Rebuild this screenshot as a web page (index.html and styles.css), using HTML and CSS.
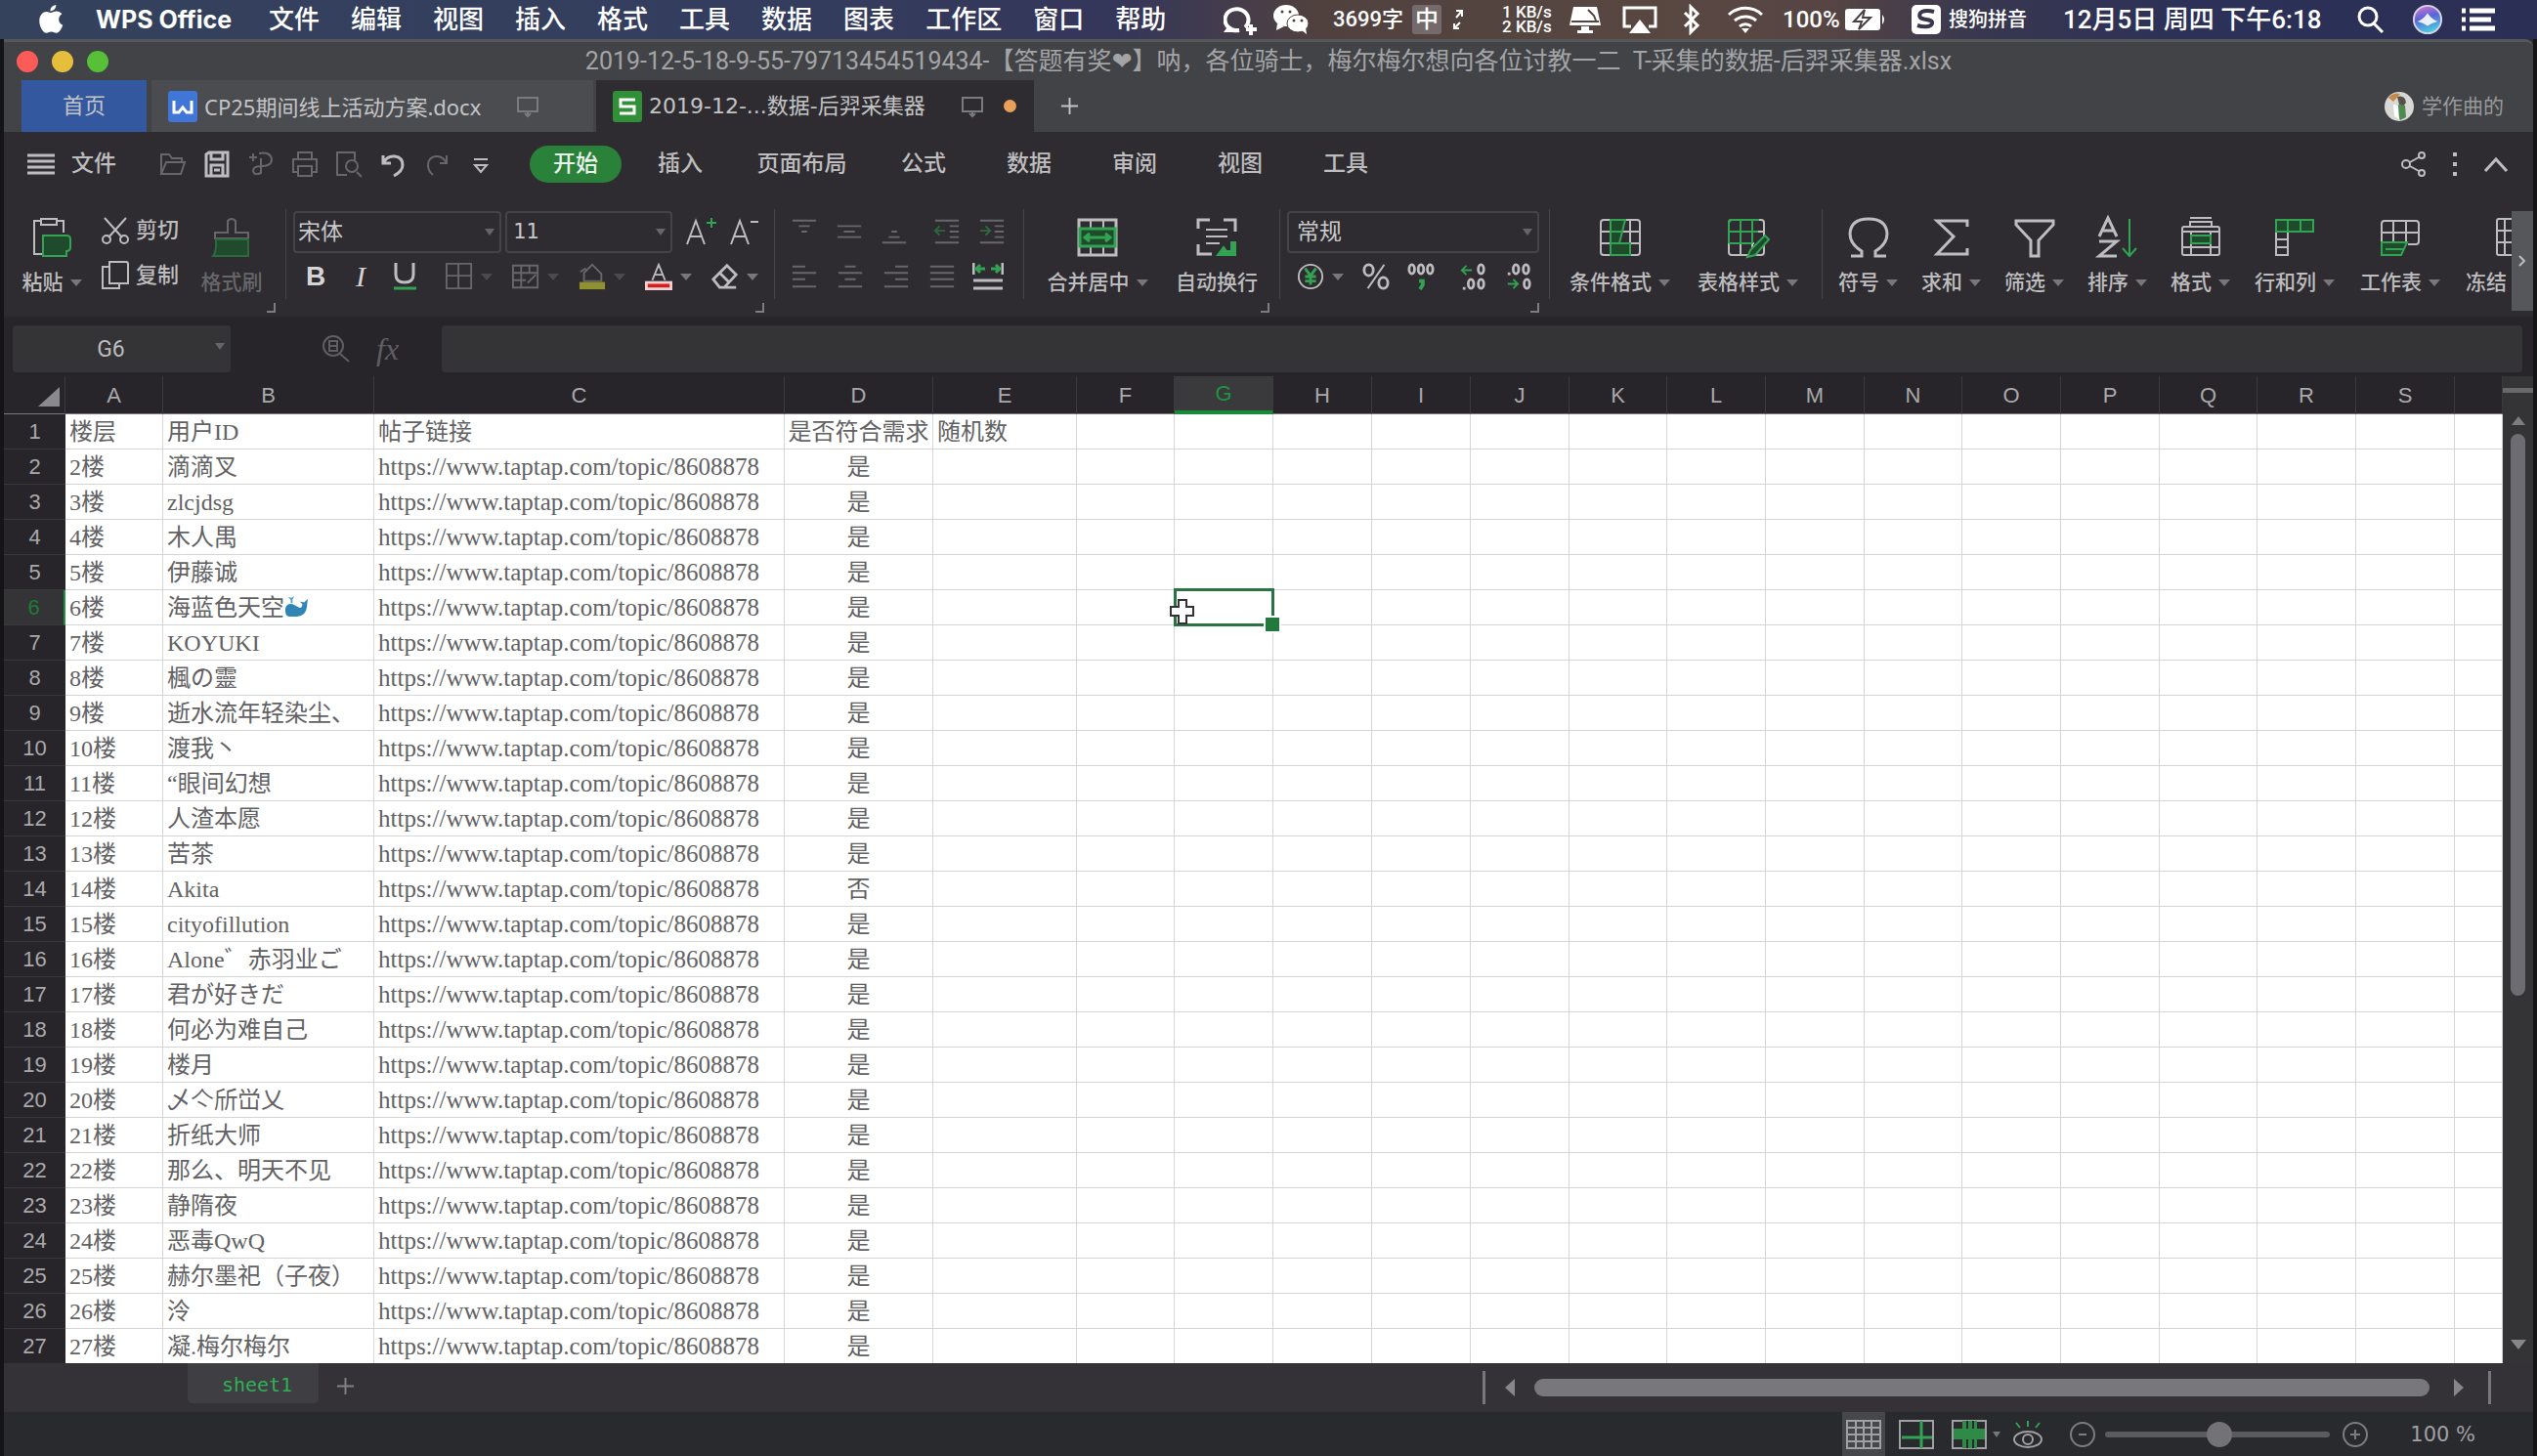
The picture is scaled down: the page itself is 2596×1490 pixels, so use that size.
FILE: index.html
```html
<!DOCTYPE html>
<html lang="zh-CN">
<head>
<meta charset="utf-8">
<title>WPS Office</title>
<link rel="stylesheet" href="styles.css">
</head>
<body>
<header class="menubar">
  <nav class="menus">
    <svg class="apple" viewBox="0 0 26 30"><path fill="#fff" d="M18 1c.3 3-2.500 6-5.500 6C12.200 4 15 1.300 18 1zM13 8.500c1.300 0 3-1.500 5.500-1.500 2 0 4 1 5.200 2.700-4.500 2.700-3.800 9 .8 10.800-1 3-3.500 7.500-6 7.500-2 0-2.600-1.200-5-1.200S10.300 28 8.500 28C5.500 28 2 21.500 2 16.500 2 10.500 5.600 7.500 8.800 7.500c1.900 0 3.200 1 4.200 1z"/></svg>
    <a class="app" href="#">WPS Office</a>
    <a href="#">文件</a><a href="#">编辑</a><a href="#">视图</a><a href="#">插入</a><a href="#">格式</a><a href="#">工具</a><a href="#">数据</a><a href="#">图表</a><a href="#">工作区</a><a href="#">窗口</a><a href="#">帮助</a>
  </nav>
  <div class="tray">
    <svg class="i34" viewBox="0 0 34 32" stroke-width="4"><path d="M22 24a12 11 0 1 0-6 3"/><path d="M7 23l-3 4h12"/><path d="M28 21v11M23 26h11" stroke-width="4"/></svg>
    <svg class="i38" viewBox="0 0 38 32" stroke-width="0"><ellipse cx="14" cy="12" rx="13" ry="11" fill="#fff"/><path d="M5 20l-1 7 8-4z" fill="#fff"/><ellipse cx="26" cy="20" rx="11" ry="9" fill="#fff" stroke="#51423f" stroke-width="1"/><path d="M30 27l5 4-1-7z" fill="#fff"/><g fill="#51423f"><circle cx="10" cy="8" r="1.500"/><circle cx="18" cy="8" r="1.500"/><circle cx="22" cy="17" r="1.500"/><circle cx="30" cy="17" r="1.500"/></g></svg>
    <span class="count">3699字</span>
    <span class="ime">中</span>
    <svg class="i14" viewBox="0 0 14 24" stroke-width="2"><path d="M5 3h6v6M11 3l-6 7M8 21H3v-5M3 21l6-6"/></svg>
    <span class="speed"><span>1 KB/s</span><span>2 KB/s</span></span>
    <svg class="i34" viewBox="0 0 34 32" stroke-width="0"><path fill="#fff" d="M5 3h24l4 19H1zM13 23h8v4h4v3H9v-3h4z"/><path d="M20 6l6 6 2 5M3 18h28" stroke="#55443f" stroke-width="2"/></svg>
    <svg class="i38" viewBox="0 0 38 32" stroke-width="3"><path d="M10 23H3V4h32v19h-7"/><path fill="#fff" stroke="none" d="M19 16l11 14H8z"/></svg>
    <svg class="i20" viewBox="0 0 20 32" stroke-width="3"><path d="M3 9l13 13-7 7V3l7 7L3 23"/></svg>
    <svg class="i38" viewBox="0 0 38 32" stroke-width="3"><path d="M2 11a25 25 0 0 1 34 0M8 17a17 17 0 0 1 22 0M13 23a9 9 0 0 1 12 0"/><path fill="#fff" stroke="none" d="M15 25h8l-4 5z"/></svg>
    <span class="pct">100%</span>
    <svg class="batt" viewBox="0 0 44 26" stroke-width="0"><rect x="1" y="2" width="36" height="22" rx="3" fill="#fff"/><path d="M39 8q4 5 0 10z" fill="#fff"/><path d="M21 3l-11 12h8l-3 8 12-12h-8z" fill="#fff" stroke="#4a3f45" stroke-width="2"/></svg>
    <svg class="i30" viewBox="0 0 30 32" stroke-width="0"><rect y="1" width="30" height="30" rx="5" fill="#fff"/><path d="M23 8C12 5 6 9 9 14c3 3 13 1 12 6-1 4-9 4-15 2" stroke="#38354d" stroke-width="4"/></svg>
    <span class="sogou">搜狗拼音</span>
    <span class="clock">12月5日 周四 下午6:18</span>
    <svg class="i30" viewBox="0 0 30 32" stroke-width="3"><circle cx="12" cy="13" r="9"/><path d="M18 20l9 9"/></svg>
    <svg class="i34" viewBox="0 0 34 34" stroke-width="0"><defs><linearGradient id="siri" x1="0" y1="0" x2="0.300" y2="1"><stop offset="0" stop-color="#e87ad0"/><stop offset=".5" stop-color="#5a63d8"/><stop offset="1" stop-color="#48c8e0"/></linearGradient></defs><circle cx="17" cy="17" r="15" fill="url(#siri)" stroke="#d8d4e4" stroke-width="2"/><path d="M6 19q6-2 11-9 5 7 11 9-6 1-11 5-5-4-11-5z" fill="#eaf0ff"/></svg>
    <svg class="i38" viewBox="0 0 38 32" stroke-width="5"><path d="M1 7h4M9 7h26M1 16h4M9 16h22M1 25h4M9 25h26"/></svg>
  </div>
</header>

<main class="window">
  <div class="titlebar">
    <div class="lights"><button class="close" aria-label="关闭"></button><button class="min" aria-label="最小化"></button><button class="max" aria-label="缩放"></button></div>
    <h1>2019-12-5-18-9-55-79713454519434-【答题有奖❤】呐，各位骑士，梅尔梅尔想向各位讨教一二&nbsp; T-采集的数据-后羿采集器.xlsx</h1>
    <div></div>
  </div>

  <div class="doctabs">
    <button class="home">首页</button>
    <button class="doc doc-w"><svg class="logo" viewBox="0 0 30 32"><rect width="30" height="32" rx="3" fill="#3f76d8"/><path d="M6 10v12h5l4-5 4 5h5V10" fill="none" stroke="#fff" stroke-width="3"/></svg><span class="name">CP25期间线上活动方案.docx</span><svg class="screen" viewBox="0 0 24 24"><path d="M2 3h20v14H2zM12 17v4M9 19l3 3 3-3"/></svg></button>
    <button class="doc doc-s"><svg class="logo" viewBox="0 0 30 32"><rect width="30" height="32" rx="3" fill="#2f9038"/><path d="M23 9H8v7h14v7H7" fill="none" stroke="#fff" stroke-width="3"/></svg><span class="name">2019-12-...数据-后羿采集器</span><svg class="screen" viewBox="0 0 24 24"><path d="M2 3h20v14H2zM12 17v4M9 19l3 3 3-3"/></svg><i class="dot"></i></button>
    <button class="plus" aria-label="新建"><svg viewBox="0 0 20 20"><path d="M10 1v18M1 10h18"/></svg></button>
    <div class="user"><svg viewBox="0 0 30 30"><circle cx="15" cy="15" r="15" fill="#d9d8d6"/><path d="M4 6q5-6 12-4l-7 8z" fill="#c58a4a"/><path d="M13 5q8-2 9 6l-3 4-4-2z" fill="#55544a"/><path d="M14 13l7 1 1 12-6 3-3-7z" fill="#4f8a50"/><path d="M9 13l5 1 1 14-5-3z" fill="#fff"/></svg><span>学作曲的</span></div>
  </div>

  <div class="quick">
    <button class="filemenu"><svg viewBox="0 0 28 24" stroke-width="3"><path d="M0 3h28M0 9h28M0 15h28M0 21h28"/></svg>文件</button>
    <div class="qicons">
      <button class="dim" aria-label="打开"><svg viewBox="0 0 28 28"><path d="M2 24V4h8l3 4h10v4M2 24l5-12h19l-4 12z"/></svg></button>
      <button aria-label="保存"><svg viewBox="0 0 28 28" stroke-width="3"><path d="M3 4l3-2h19v24H3zM8 2v7h12V2M8 26V15h12v11M11 20h6"/></svg></button>
      <button class="dim" aria-label="输出"><svg viewBox="0 0 28 28"><path d="M2 7h8M6 3v8M12 3q12-2 13 6 0 7-11 7M14 16q-8 0-8 5 1 5 8 2V8"/></svg></button>
      <button class="dim" aria-label="打印"><svg viewBox="0 0 28 28"><path d="M7 9V2h14v7M7 22H2V9h24v13h-5M7 16h14v10H7z"/></svg></button>
      <button class="dim" aria-label="预览"><svg viewBox="0 0 28 28"><path d="M12 25H2V2h18v8M22 22l5 5"/><circle cx="17" cy="16" r="6"/></svg></button>
      <button aria-label="撤销"><svg viewBox="0 0 28 28" stroke-width="3"><path d="M4 5v8h8M4 13q4-8 12-7 8 1 8 9 0 6-9 11"/></svg></button>
      <button class="dim" aria-label="恢复"><svg viewBox="0 0 28 28"><path d="M24 5v8h-7M24 13q-4-8-11-7-8 1-8 9 0 6 5 10"/></svg></button>
      <button aria-label="更多"><svg viewBox="0 0 28 28"><path d="M7 9h14M8 15h12l-6 7z"/></svg></button>
    </div>
    <button class="pill">开始</button>
    <nav class="rtabs"><button>插入</button><button>页面布局</button><button>公式</button><button>数据</button><button>审阅</button><button>视图</button><button>工具</button></nav>
    <div class="qright">
      <svg viewBox="0 0 28 28"><circle cx="6" cy="14" r="4"/><circle cx="22" cy="5" r="3"/><circle cx="22" cy="23" r="3"/><path d="M10 12l9-5M10 16l9 5"/></svg>
      <svg viewBox="0 0 28 28" stroke-width="4"><path d="M14 2v4M14 12v4M14 22v4"/></svg>
      <svg viewBox="0 0 28 28" stroke-width="3"><path d="M3 21L14 9l11 12"/></svg>
    </div>
  </div>

  <div class="ribbon">
    <div class="groups">
      <section class="group clip">
        <button class="big"><svg class="bi" viewBox="0 0 42 42"><path d="M10 4H3v34h8M26 4h7v12M10 2h16v6H10z"/><path class="g gf" d="M12 19h24q4 0 4 4v8q0 4-4 4v5H12z"/></svg><span>粘贴<i class="arr"></i></span></button>
        <div class="pair">
          <button><svg viewBox="0 0 30 30"><path d="M4 2l18 20M26 2L8 22"/><circle cx="6" cy="24" r="4"/><circle cx="24" cy="24" r="4"/></svg>剪切</button>
          <button><svg viewBox="0 0 30 30"><path d="M9 1h17q2 0 2 2v20H9zM9 6H2v22h17v-5"/></svg>复制</button>
        </div>
        <button class="big dim"><svg class="bi" viewBox="0 0 42 42"><path d="M17 16V4q4-4 8 0v12h13v6H4v-6z"/><path class="g gf" d="M5 23h33v17H2q3-4 3-10z"/></svg><span>格式刷</span></button>
        <i class="corner"></i>
      </section>
      <i class="sep"></i>
      <section class="group font two">
        <div class="row">
          <span class="sel s-font"><select aria-label="字体"><option>宋体</option></select></span>
          <span class="sel s-size"><select aria-label="字号"><option>11</option></select></span>
          <button class="t" aria-label="增大字号"><svg viewBox="0 0 32 30"><path d="M2 28L11 4l9 24M5 20h12"/><path class="g" d="M27 1v10M22 6h10"/></svg></button>
          <button class="t" aria-label="减小字号"><svg viewBox="0 0 32 30"><path d="M2 28L11 4l9 24M5 20h12M22 5h8"/></svg></button>
        </div>
        <div class="row split">
          <span class="tools"><button class="t b">B</button><button class="t it">I</button><button class="t" aria-label="下划线"><svg viewBox="0 0 32 30"><path stroke-width="3" d="M6 1v12q0 8 9 8t9-8V1"/><path class="g" stroke-width="3" d="M4 27h23"/></svg></button></span>
          <span class="tools drops">
            <button class="dim" aria-label="边框"><svg viewBox="0 0 30 30"><path d="M1 1h27v27H1zM14 1v27M1 14h27"/></svg><i class="arr"></i></button>
            <button class="dim" aria-label="绘制边框"><svg viewBox="0 0 30 30"><path d="M1 3h27v24H1zM1 11h27M1 19h14M10 3v24M19 3v8M17 22l9-9"/></svg><i class="arr"></i></button>
            <button class="dim" aria-label="填充颜色"><svg viewBox="0 0 30 30"><path d="M6 11L15 2l10 10v8H6zM2 10l6-4"/><path d="M1 25h28" stroke="#8f9030" stroke-width="8"/></svg><i class="arr"></i></button>
            <button aria-label="字体颜色"><svg viewBox="0 0 30 30"><path d="M8 19l7-17 7 17M10 13h10"/><path d="M0 25h30" stroke="#f0d0d0" stroke-width="10"/><path d="M3 25h24" stroke="#d02020" stroke-width="4"/></svg><i class="arr"></i></button>
            <button aria-label="清除"><svg viewBox="0 0 30 30" stroke-width="3"><path d="M2 18L17 3l10 10-13 14H9zM9 11l10 10M11 27h16"/></svg><i class="arr"></i></button>
          </span>
        </div>
        <i class="corner"></i>
      </section>
      <i class="sep"></i>
      <section class="group align two">
        <div class="row split">
          <span class="tools"><button class="t dim"><svg viewBox="0 0 30 30"><path d="M2 3h26M9 9h12M12 15h6"/></svg></button><button class="t dim"><svg viewBox="0 0 30 30"><path d="M2 9h26M9 15h12M2 21h26"/></svg></button><button class="t dim"><svg viewBox="0 0 30 30"><path d="M12 15h6M9 21h12M2 27h26"/></svg></button></span>
          <span class="tools"><button class="t dim"><svg viewBox="0 0 30 30"><path d="M2 3h26M18 9h10M18 15h10M18 21h10M2 27h26"/><path class="g" d="M2 14h11M7 9l-5 5 5 5"/></svg></button><button class="t dim"><svg viewBox="0 0 30 30"><path d="M2 3h26M18 9h10M18 15h10M18 21h10M2 27h26"/><path class="g" d="M2 14h11M8 9l5 5-5 5"/></svg></button></span>
        </div>
        <div class="row">
          <button class="t dim"><svg viewBox="0 0 30 30"><path d="M2 4h14M2 11h26M2 18h14M2 26h26"/></svg></button>
          <button class="t dim"><svg viewBox="0 0 30 30"><path d="M9 4h12M2 11h26M9 18h12M2 26h26"/></svg></button>
          <button class="t dim"><svg viewBox="0 0 30 30"><path d="M14 4h14M2 11h26M14 18h14M2 26h26"/></svg></button>
          <button class="t dim"><svg viewBox="0 0 30 30"><path d="M2 4h26M2 11h26M2 18h26M2 26h26"/></svg></button>
          <button class="t wideicon"><svg viewBox="0 0 32 30"><path stroke-width="3" d="M1 1v12M31 1v12M1 19h30M1 27h30"/><path class="g" stroke-width="3" d="M4 7h9M19 7h9M8 3L4 7l4 4M24 3l4 4-4 4"/></svg></button>
        </div>
      </section>
      <i class="sep"></i>
      <section class="group merge">
        <button class="big"><svg class="bi" viewBox="0 0 42 42"><path stroke-width="3" d="M2 3h38v36H2z"/><path d="M14 3v8M27 3v8M14 31v8M27 31v8"/><path class="g gf" stroke-width="3" d="M3 12h36v18H3zM8 21h26M13 17l-5 4 5 4M29 17l5 4-5 4"/></svg><span>合并居中<i class="arr"></i></span></button>
        <button class="big"><svg class="bi" viewBox="0 0 42 42"><path stroke-width="3" d="M2 12V3h12M28 3h12v9M2 28v10h14M40 12v3"/><path d="M10 13h22M10 20h22M10 27h14"/><path class="g gs" d="M40 26v13H22l6-8 3 4h5v-9z"/></svg><span>自动换行</span></button>
        <i class="corner"></i>
      </section>
      <i class="sep"></i>
      <section class="group num two">
        <div class="row"><span class="sel s-num"><select aria-label="数字格式"><option>常规</option></select></span></div>
        <div class="row split">
          <span class="tools"><button class="cur"><svg viewBox="0 0 30 30"><circle cx="15" cy="15" r="13"/><path class="g" stroke-width="3" d="M9 6l6 8 6-8M15 14v10M9 15h12M9 20h12"/></svg><i class="arr"></i></button><button class="t"><svg viewBox="0 0 30 30" stroke-width="3"><ellipse cx="7" cy="8" rx="5" ry="6"/><ellipse cx="23" cy="22" rx="5" ry="6"/><path stroke-width="2" d="M24 2L6 28"/></svg></button><button class="t"><svg viewBox="0 0 30 30"><g stroke-width="3"><ellipse cx="5" cy="7" rx="3" ry="5"/><ellipse cx="15" cy="7" rx="3" ry="5"/><ellipse cx="25" cy="7" rx="3" ry="5"/></g><path class="g" stroke-width="4" d="M13 20h4v4l-3 5"/></svg></button></span>
          <span class="tools"><button class="t"><svg viewBox="0 0 30 30"><path class="g" d="M2 8h11M7 3L2 8l5 5"/><g stroke-width="3"><ellipse cx="23" cy="7" rx="3" ry="5"/><ellipse cx="12" cy="23" rx="3" ry="5"/><ellipse cx="23" cy="23" rx="3" ry="5"/><path d="M3 28h3"/></g></svg></button><button class="t"><svg viewBox="0 0 30 30"><path class="g" d="M3 23h11M9 18l5 5-5 5"/><g stroke-width="3"><ellipse cx="12" cy="7" rx="3" ry="5"/><ellipse cx="23" cy="7" rx="3" ry="5"/><ellipse cx="24" cy="23" rx="3" ry="5"/><path d="M3 12h3"/></g></svg></button></span>
        </div>
        <i class="corner"></i>
      </section>
      <i class="sep"></i>
      <section class="group styles">
        <button class="big"><svg class="bi" viewBox="0 0 42 42"><rect x="1" y="3" width="40" height="36" rx="3"/><path d="M11 3v36M31 3v36M1 15h40M1 27h40"/><path class="g gf" d="M11 3h15l-6 24h11v12H11zM11 15h12M11 27h9"/></svg><span>条件格式<i class="arr"></i></span></button>
        <button class="big"><svg class="bi" viewBox="0 0 42 42"><rect x="1" y="3" width="36" height="36" rx="3"/><path d="M1 15h36M1 27h26M13 3v36M25 3v30"/><path class="g" d="M1 27V6q0-3 3-3h28M1 15h30M13 3v24M25 3v24M1 27h24"/><path class="g gf" d="M38 19l4 4-14 16-8 2 3-7z"/></svg><span>表格样式<i class="arr"></i></span></button>
      </section>
      <i class="sep"></i>
      <section class="group edit">
        <button class="big"><svg class="bi" viewBox="0 0 42 42"><path stroke-width="3" d="M3 40h11v-5Q2 28 2 17 3 2 21 2t19 15q0 11-12 18v5h11"/></svg><span>符号<i class="arr"></i></span></button>
        <button class="big"><svg class="bi" viewBox="0 0 42 42"><path stroke-width="3" d="M37 10V4H6l17 16L6 38h31v-6"/></svg><span>求和<i class="arr"></i></span></button>
        <button class="big"><svg class="bi" viewBox="0 0 42 42"><path stroke-width="3" d="M2 4h38v4L25 24v16h-8V24L2 8z"/></svg><span>筛选<i class="arr"></i></span></button>
        <button class="big"><svg class="bi" viewBox="0 0 42 42"><path stroke-width="3" d="M2 20L11 1l9 19M5 14h12M2 25h18L2 40h18"/><path class="g" d="M33 2v38M26 32l7 8 7-8"/></svg><span>排序<i class="arr"></i></span></button>
        <button class="big"><svg class="bi" viewBox="0 0 42 42"><rect x="2" y="10" width="38" height="29" rx="2"/><path d="M10 10V5h22v5M10 1h22M2 15h38M11 15v24M31 15v24M2 31h38"/><path class="g gf" d="M11 19h20v8H11z"/></svg><span>格式<i class="arr"></i></span></button>
        <button class="big wide"><svg class="bi" viewBox="0 0 42 42"><path d="M2 14v25h12V14M2 23h12M2 31h12"/><path class="g gf" d="M2 3h38v12H2zM14 3v12M27 3v12"/></svg><span>行和列<i class="arr"></i></span></button>
        <button class="big wide"><svg class="bi" viewBox="0 0 42 42"><path d="M2 25V7q0-3 3-3h32q3 0 3 3v18q0 3-3 3h-8M2 16h38M14 4v22M27 4v22"/><path class="g gf" d="M2 26h26l-6 13H2zM6 33h18"/></svg><span>工作表<i class="arr"></i></span></button>
        <button class="big freeze"><svg class="bi" viewBox="0 0 42 42"><rect x="2" y="2" width="38" height="37" rx="2"/><path d="M10 2v37M2 14h38M2 26h38"/></svg><span>冻结</span></button>
      </section>
    </div>
    <button class="more" aria-label="更多功能"><svg viewBox="0 0 10 14"><path d="M2 2l5 5-5 5"/></svg></button>
  </div>

  <div class="formula">
    <div class="namebox sel"><input value="G6" aria-label="名称框"></div>
    <div class="ficons"><svg viewBox="0 0 30 30"><circle cx="12" cy="12" r="10"/><path d="M19 20l9 8M8 7h8v10H8zM8 12h8"/></svg><span>fx</span></div>
    <input class="fx" aria-label="编辑栏">
  </div>

  <div class="sheet">
    <div class="gridwrap"><table class="grid" id="grid"></table></div>
    <div class="vscroll"><i class="handle"></i><i class="up"></i><div class="track"><i class="vthumb"></i></div><i class="down"></i></div>
  </div>

  <div class="sheetbar">
    <button class="stab">sheet1</button>
    <button class="addsheet" aria-label="新建工作表"><svg viewBox="0 0 20 20"><path d="M10 1v18M1 10h18"/></svg></button>
    <div class="hscroll"><i class="bar"></i><i class="left"></i><i class="hthumb"></i><i class="right"></i><i class="bar"></i></div>
  </div>

  <footer class="status">
    <button class="view on" aria-label="普通视图"><svg viewBox="0 0 36 30"><path d="M1 1h34v28H1zM1 8h34M1 15h34M1 22h34M10 1v28M18 1v28M26 1v28"/></svg></button>
    <button class="view" aria-label="分页预览"><svg viewBox="0 0 36 30"><path d="M1 1h34v28H1z"/><path class="g" stroke-width="3" d="M23 1v28M3 18h31"/></svg></button>
    <button class="view" aria-label="阅读模式"><svg viewBox="0 0 36 30"><path d="M1 1h34v28H1z"/><path fill="#2f8a48" stroke="none" d="M2 9h32v11H2zM11 1h15v28H11z"/><path stroke="#292a2d" d="M16 1v8M16 20v9M22 1v8M22 20v9"/></svg></button>
    <i class="arr"></i>
    <button class="view eye" aria-label="护眼模式"><svg viewBox="0 0 36 30"><ellipse cx="18" cy="20" rx="14" ry="8"/><circle cx="18" cy="20" r="5"/><path class="g" d="M18 1v6M6 3l4 5M30 3l-4 5"/></svg></button>
    <button class="round" aria-label="缩小"><svg viewBox="0 0 28 28"><circle cx="14" cy="14" r="12"/><path d="M10 14h8"/></svg></button>
    <input class="zoom" type="range" min="0" max="100" value="51" aria-label="缩放">
    <button class="round" aria-label="放大"><svg viewBox="0 0 28 28"><circle cx="14" cy="14" r="12"/><path d="M9 14h10M14 9v10"/></svg></button>
    <span class="pctz">100 %</span>
  </footer>
</main>
<script src="script.js"></script>
</body>
</html>
```
FILE: styles.css
```css
* { box-sizing: border-box; }
html, body { margin: 0; height: 100%; }
body {
  display: flex; flex-direction: column; overflow: hidden;
  background: #121114; color: #bdbdbf;
  font: 22px/24px Roboto, "Noto Sans CJK SC", sans-serif;
}
button { border: 0; padding: 0; margin: 0; background: none; color: inherit; font: inherit; white-space: nowrap; }
svg { display: block; fill: none; stroke: currentColor; flex: none; }
svg:not([stroke-width]) { stroke-width: 2; }
i { display: block; flex: none; }
.g { stroke: #32a352; }
.gf { fill: #1f4a2c; }
.gs { fill: #32a352; }
.dim { color: #67676b; }
.dim .g { stroke: #2c6a3e; }

/* system menu bar */
.menubar {
  height: 40px; flex: none; display: flex; justify-content: space-between; align-items: center;
  padding: 0 38px; color: #fff; font-size: 26px; font-weight: 500;
  background: linear-gradient(90deg, #34425c 0%, #343d5e 30%, #34365a 44%, #50413f 52%, #584741 65%, #564543 72%, #38374f 78%, #2c3157 86%, #2b2f55 100%);
}
.menus { display: flex; align-items: center; gap: 32px; }
.menus a { color: inherit; text-decoration: none; white-space: nowrap; }
.menus .apple { width: 28px; height: 32px; stroke: none; }
.menus .app { font-family: Inter, sans-serif; font-weight: 700; font-size: 25px; width: 145px; }
.tray {
  display: grid; align-items: center; justify-items: start; white-space: nowrap;
  grid-template-columns: 50px 62px 81px 40px 52px 68px 54px 62px 46px 57px 63px 69px 38px 117px 300px 56px 51px 40px;
}
.tray svg { height: 32px; }
.i34 { width: 34px; } .i38 { width: 38px; } .i30 { width: 30px; } .i20 { width: 20px; } .i14 { width: 14px; }
.tray .batt { width: 44px; height: 26px; }
.count { font-size: 22px; }
.ime { background: #756a6b; width: 30px; text-align: center; font-size: 24px; line-height: 30px; border-radius: 3px; }
.speed { display: flex; flex-direction: column; font-size: 17px; line-height: 15px; }
.pct { font-size: 24px; }
.sogou { font-size: 20px; }
.clock { font-size: 26px; }

/* window chrome */
.window { flex: 1; min-height: 0; display: flex; flex-direction: column; border: solid #141316; border-width: 0 4px; background: #2e2c30; }
.titlebar { height: 42px; flex: none; display: grid; grid-template-columns: 200px 1fr 200px; align-items: center; background: #424346; border-top: 3px solid #56575a; border-radius: 0 8px 0 0; }
.titlebar h1 { margin: 0; font: 25px/30px Roboto, "Noto Sans CJK SC", "DejaVu Sans", sans-serif; text-align: center; color: #a3a4a6; white-space: nowrap; }
.lights { display: flex; gap: 14px; padding-left: 13px; }
.lights button { width: 22px; height: 22px; border-radius: 50%; }
.lights .close { background: #fc5b57; }
.lights .min { background: #e5bf3c; }
.lights .max { background: #57c038; }

.doctabs { height: 53px; flex: none; display: flex; background: #424346; padding-left: 18px; color: #c3c4c6; }
.home { width: 128px; background: #3458a0; }
.doc { display: flex; align-items: center; text-align: left; padding-left: 17px; }
.doc-w { width: 452px; background: #4b4c50; margin: 0 3px 0 5px; }
.doc-s { width: 448px; background: #2e2c30; }
.logo { width: 30px; height: 32px; margin-right: 7px; }
.logo rect { stroke: none; }
.name { width: 319px; font-family: "Noto Sans", "Noto Sans CJK SC", sans-serif; font-size: 22px; }
.doc-s .name { font-family: "DejaVu Sans", "Noto Sans CJK SC", sans-serif; }
.screen { width: 24px; height: 24px; color: #7a7b7e; }
.dot { width: 13px; height: 13px; border-radius: 50%; background: #e8a05a; margin-left: 20px; }
.plus { width: 72px; display: grid; place-items: center; }
.plus svg, .addsheet svg { width: 19px; height: 19px; }
.user { margin-left: auto; display: flex; align-items: center; gap: 8px; padding-right: 30px; font-size: 21px; color: #97989a; }
.user svg { width: 30px; height: 30px; stroke: none; }

.quick { height: 66px; flex: none; display: flex; align-items: center; padding: 0 24px; font-size: 23px; font-weight: 500; }
.filemenu { display: flex; align-items: center; gap: 17px; width: 126px; }
.filemenu svg { width: 28px; height: 24px; }
.qicons { display: grid; grid-template-columns: repeat(8, 45px); width: 388px; }
.qicons button { display: grid; place-items: center; height: 40px; }
.qicons svg { width: 28px; height: 28px; }
.pill { width: 94px; height: 38px; border-radius: 19px; background: #2a8139; color: #e8f2ea; margin-right: 6px; }
.rtabs { display: grid; grid-template-columns: 108px 141px repeat(5, 108px); }
.qright { margin-left: auto; display: flex; gap: 14px; }
.qright svg { width: 28px; height: 28px; }

/* ribbon */
.ribbon { height: 124px; flex: none; display: flex; font-size: 21px; font-weight: 500; border-bottom: 2px solid #2a282c; }
.groups { flex: 1; min-width: 0; overflow: hidden; display: flex; }
.group { position: relative; flex: none; display: flex; height: 122px; }
.sep { width: 1px; height: 92px; margin-top: 13px; background: #444347; }
.corner { position: absolute; right: 10px; bottom: 3px; width: 9px; height: 10px; border: solid #7d7d80; border-width: 0 2px 2px 0; }
.big { display: flex; flex-direction: column; align-items: center; padding-top: 21px; height: 110px; }
.bi { width: 42px; height: 42px; overflow: visible; }
.big span { display: flex; align-items: center; gap: 7px; margin-top: 12px; font-size: 21px; line-height: 26px; }
.arr { width: 0; height: 0; border: solid transparent; border-width: 7px 6px 0; border-top-color: #77777a; }
.dim .arr { border-top-color: #4b4b4e; }
.clip { width: 288px; padding-left: 3px; }
.clip .big { width: 92px; }
.pair { display: grid; grid-template-rows: 46px 46px; padding: 12px 0 0 4px; width: 92px; }
.pair button { display: flex; align-items: center; gap: 6px; font-size: 22px; }
.pair svg { width: 30px; height: 30px; }
.two { flex-direction: column; padding: 13px 7px 0; }
.row { display: flex; align-items: center; height: 46px; }
.split { gap: 8px; }
.tools { display: flex; }
.t { width: 46px; height: 40px; display: grid; place-items: center; }
.t svg, .drops svg, .cur svg { width: 28px; height: 28px; }
.font .t svg, .wideicon svg { width: 32px; height: 30px; }
.b { font: 900 28px/30px "Liberation Sans", sans-serif; color: #d5d5d7; }
.it { font: italic 30px/30px "Liberation Serif", serif; color: #d5d5d7; }
.drops button, .cur { width: 68px; height: 40px; display: flex; align-items: center; justify-content: center; gap: 8px; }
.sel { position: relative; display: block; height: 43px; border: 2px solid #444347; border-radius: 4px; }
.sel::after { content: ""; position: absolute; right: 5px; top: 16px; border: solid transparent; border-width: 7px 5px 0; border-top-color: #66666a; }
.sel select { appearance: none; width: 100%; height: 100%; border: 0; padding: 0 3px; background: transparent; color: #c9c9cb; font: 23px/24px "DejaVu Sans", "Noto Sans CJK SC", sans-serif; }
.s-font { width: 215px; margin-right: 4px; }
.s-size { width: 172px; margin-right: 6px; }
.s-size select { padding: 0 6px; font-size: 21px; }
.s-num { width: 258px; }
.s-num select { padding: 0 8px; }
.font { width: 499px; }
.align { width: 254px; }
.align .row { gap: 1px; }
.align .split { gap: 8px; }
.merge { width: 261px; padding-left: 9px; }
.merge .big { width: 132px; }
.merge .big + .big { width: 112px; }
.num { width: 275px; }
.num .split { gap: 8px; }
.styles { width: 278px; padding-left: 6px; }
.styles .big { width: 131px; }
.edit { padding-left: 4px; }
.edit .big { width: 85px; }
.edit .wide { width: 108px; }
.edit .freeze { width: 59px; align-items: flex-start; padding-left: 13px; }
.freeze .bi { margin-left: 30px; }
.more { width: 22px; height: 102px; margin-top: 15px; background: #56575b; display: grid; place-items: center; }
.more svg { width: 10px; height: 14px; }

/* formula bar */
.formula { height: 60px; flex: none; display: flex; align-items: center; background: #272529; padding: 4px 11px 0 9px; }
.namebox { width: 223px; height: 48px; border: 0; background: #343336; }
.namebox::after { right: 6px; top: 18px; }
.formula input { width: 100%; height: 48px; border: 0; padding: 0; border-radius: 4px; background: #343336; color: #bdbdbf; font: 23px/24px Roboto, sans-serif; }
.formula .namebox input { text-align: center; padding-right: 22px; }
.ficons { width: 216px; flex: none; padding-left: 93px; display: flex; align-items: center; gap: 26px; color: #5f5e62; }
.ficons svg { width: 30px; height: 30px; }
.ficons span { font: italic 32px/30px "Liberation Serif", serif; }
.formula .fx { flex: 1; width: auto; }

/* cells */
.sheet { flex: 1; min-height: 0; display: flex; background: #272529; }
.gridwrap { flex: 1; min-width: 0; overflow: hidden; }
.grid { width: 100%; table-layout: fixed; border-collapse: separate; border-spacing: 0; background: #fff; color: #626264; font: 24px/34px "Liberation Serif", "Noto Sans CJK SC", "Noto Sans CJK JP", serif; }
.grid .rowhead { width: 63px; }
.grid .wa { width: 100px; } .grid .wb { width: 216px; } .grid .wc { width: 420px; } .grid .wd { width: 152px; } .grid .we { width: 147px; }
.grid .w0 { width: 100px; } .grid .w1 { width: 101px; }
.grid th { background: #272529; color: #a9a9ac; font: 22px/35px "Liberation Sans", sans-serif; padding: 0; }
.grid thead th { height: 39px; border-right: 1px solid #3b393d; border-bottom: 1px solid #7b7b7d; }
.grid tbody th { height: 36px; border-bottom: 1px solid #39383b; }
.grid td { height: 36px; padding: 0 0 0 4px; border: solid #d5d5d6; border-width: 0 1px 1px 0; white-space: nowrap; position: relative; }
.grid td.mid { text-align: center; padding: 0; }
.grid td.url { font-size: 25px; }
.grid thead th.on { color: #1d9440; background: #3a393c; border-bottom: 4px solid #168a38; }
.grid tbody th.on { color: #1d7a38; background: #343437; border-right: 2px solid #1d9440; }
.corner-tri { border: solid transparent; border-width: 0 0 20px 22px; border-bottom-color: #8a8a8c; width: 0; margin: 3px 5px 0 auto; }
.whale { display: inline-block; width: 24px; height: 22px; vertical-align: -2px; stroke: none; }
.selbox { position: absolute; inset: -2px -2px -2px -1px; border: 3px solid #2a7444; z-index: 1; }
.selbox::after { content: ""; position: absolute; right: -10px; bottom: -10px; width: 14px; height: 14px; background: #217a3c; border: 2px solid #fff; }
.pointer { position: absolute; left: -6px; top: 8px; width: 28px; height: 28px; z-index: 2; }
.vscroll { width: 31px; flex: none; display: flex; flex-direction: column; align-items: center; background: #343336; padding: 12px 0 14px; }
.handle { width: 31px; height: 5px; background: #68686b; margin-bottom: 24px; }
.up, .down { border: solid transparent; width: 0; }
.up { border-width: 0 7px 9px; border-bottom-color: #7d7d80; }
.down { border-width: 10px 8px 0; border-top-color: #87878a; }
.track { flex: 1; width: 15px; padding-top: 9px; }
.vthumb { height: 62%; border-radius: 8px; background: #6d6c70; }

/* bottom bars */
.sheetbar { height: 50px; flex: none; display: flex; background: #343236; padding-left: 188px; }
.stab { width: 134px; height: 41px; padding: 2px 0 0 8px; background: #3f3e42; color: #2fae57; border-radius: 0 0 5px 5px; font: 20px/24px "DejaVu Sans Mono", monospace; }
.addsheet { width: 54px; height: 46px; display: grid; place-items: center; color: #828285; }
.hscroll { margin-left: auto; width: 45%; display: flex; align-items: center; padding: 0 43px 0 5px; gap: 20px; }
.bar { width: 3px; height: 34px; background: #77767a; }
.hthumb { flex: 1; height: 18px; border-radius: 9px; background: #78777b; }
.left, .right { border: solid transparent; }
.left { border-width: 9px 10px 9px 0; border-right-color: #87878a; }
.right { border-width: 9px 0 9px 10px; border-left-color: #87878a; margin: 0 5px; }
.status { height: 45px; flex: none; display: flex; justify-content: flex-end; align-items: center; background: #292a2d; padding-right: 59px; color: #a0a0a3; }
.view { width: 44px; height: 45px; margin-right: 10px; display: grid; place-items: center; }
.view svg { width: 36px; height: 30px; }
.view.on { background: #46474b; }
.status .arr { margin-left: -8px; border-width: 6px 4px 0; }
.eye { width: 36px; margin: 0 24px 0 10px; }
.round svg { width: 28px; height: 28px; color: #7c7c7f; }
.zoom { appearance: none; width: 230px; height: 26px; margin: 0 12px 0 9px; background: transparent; }
.zoom::-webkit-slider-runnable-track { height: 6px; background: #5b5b5e; border-radius: 3px; }
.zoom::-webkit-slider-thumb { appearance: none; width: 26px; height: 26px; margin-top: -10px; border-radius: 50%; background: #737376; }
.pctz { width: 109px; text-align: right; font: 21px/24px "DejaVu Sans", sans-serif; }
```
FILE: script.js
```js
const names = ['滴滴叉', 'zlcjdsg', '木人禺', '伊藤诚', '海蓝色天空', 'KOYUKI', '楓の靈', '逝水流年轻染尘、', '渡我丶', '“眼间幻想', '人渣本愿', '苦茶', 'Akita', 'cityofillution', 'Alone゛赤羽业ご', '君が好きだ', '何必为难自己', '楼月', '乄亽斦峃乂', '折纸大师', '那么、明天不见', '静隋夜', '恶毒QwQ', '赫尔墨祀（子夜）', '泠', '凝.梅尔梅尔'];
const letters = 'ABCDEFGHIJKLMNOPQRS'.split('');
const widths = ['wa', 'wb', 'wc', 'wd', 'we', 'w0', 'w1', 'w1', 'w1', 'w1', 'w0', 'w1', 'w1', 'w0', 'w1', 'w1', 'w0', 'w1', 'w1'];
const whale = '<svg class="whale" viewBox="0 0 26 24"><path fill="#2f86b5" d="M1 14Q2 8 9 9l8 4q3 0 3-4l-3-3 5 1 4-4-1 9q-1 10-11 11H6Q0 23 1 14z"/><path fill="#4fa5cc" d="M7 8V4L4 1l4 1 3-2-2 4v4z"/></svg>';
const pointer = '<svg class="pointer" viewBox="0 0 28 28"><path fill="#fff" stroke="#333" stroke-width="2" d="M10 2h8v7h7v9h-7v8h-8v-8H2V9h8z"/></svg>';

let html = '<thead><tr><th class="rowhead"><i class="corner-tri"></i></th>';
letters.forEach((c, i) => { html += `<th scope="col" class="${widths[i]}${c === 'G' ? ' on' : ''}">${c}</th>`; });
html += '<th></th></tr></thead><tbody>';
for (let r = 1; r <= 27; r++) {
  const row = r === 1
    ? ['楼层', '用户ID', '帖子链接', '是否符合需求', '随机数']
    : [r + '楼', names[r - 2] + (r === 6 ? whale : ''), 'https://www.taptap.com/topic/8608878', r === 14 ? '否' : '是', ''];
  html += `<tr><th scope="row"${r === 6 ? ' class="on"' : ''}>${r}</th>`;
  for (let c = 0; c < 20; c++) {
    const selected = r === 6 && c === 6;
    const cls = c === 3 ? ' class="mid"' : c === 2 && r > 1 ? ' class="url"' : '';
    html += `<td${cls}>${selected ? '<i class="selbox"></i>' + pointer : row[c] || ''}</td>`;
  }
  html += '</tr>';
}
document.getElementById('grid').innerHTML = html + '</tbody>';
```
